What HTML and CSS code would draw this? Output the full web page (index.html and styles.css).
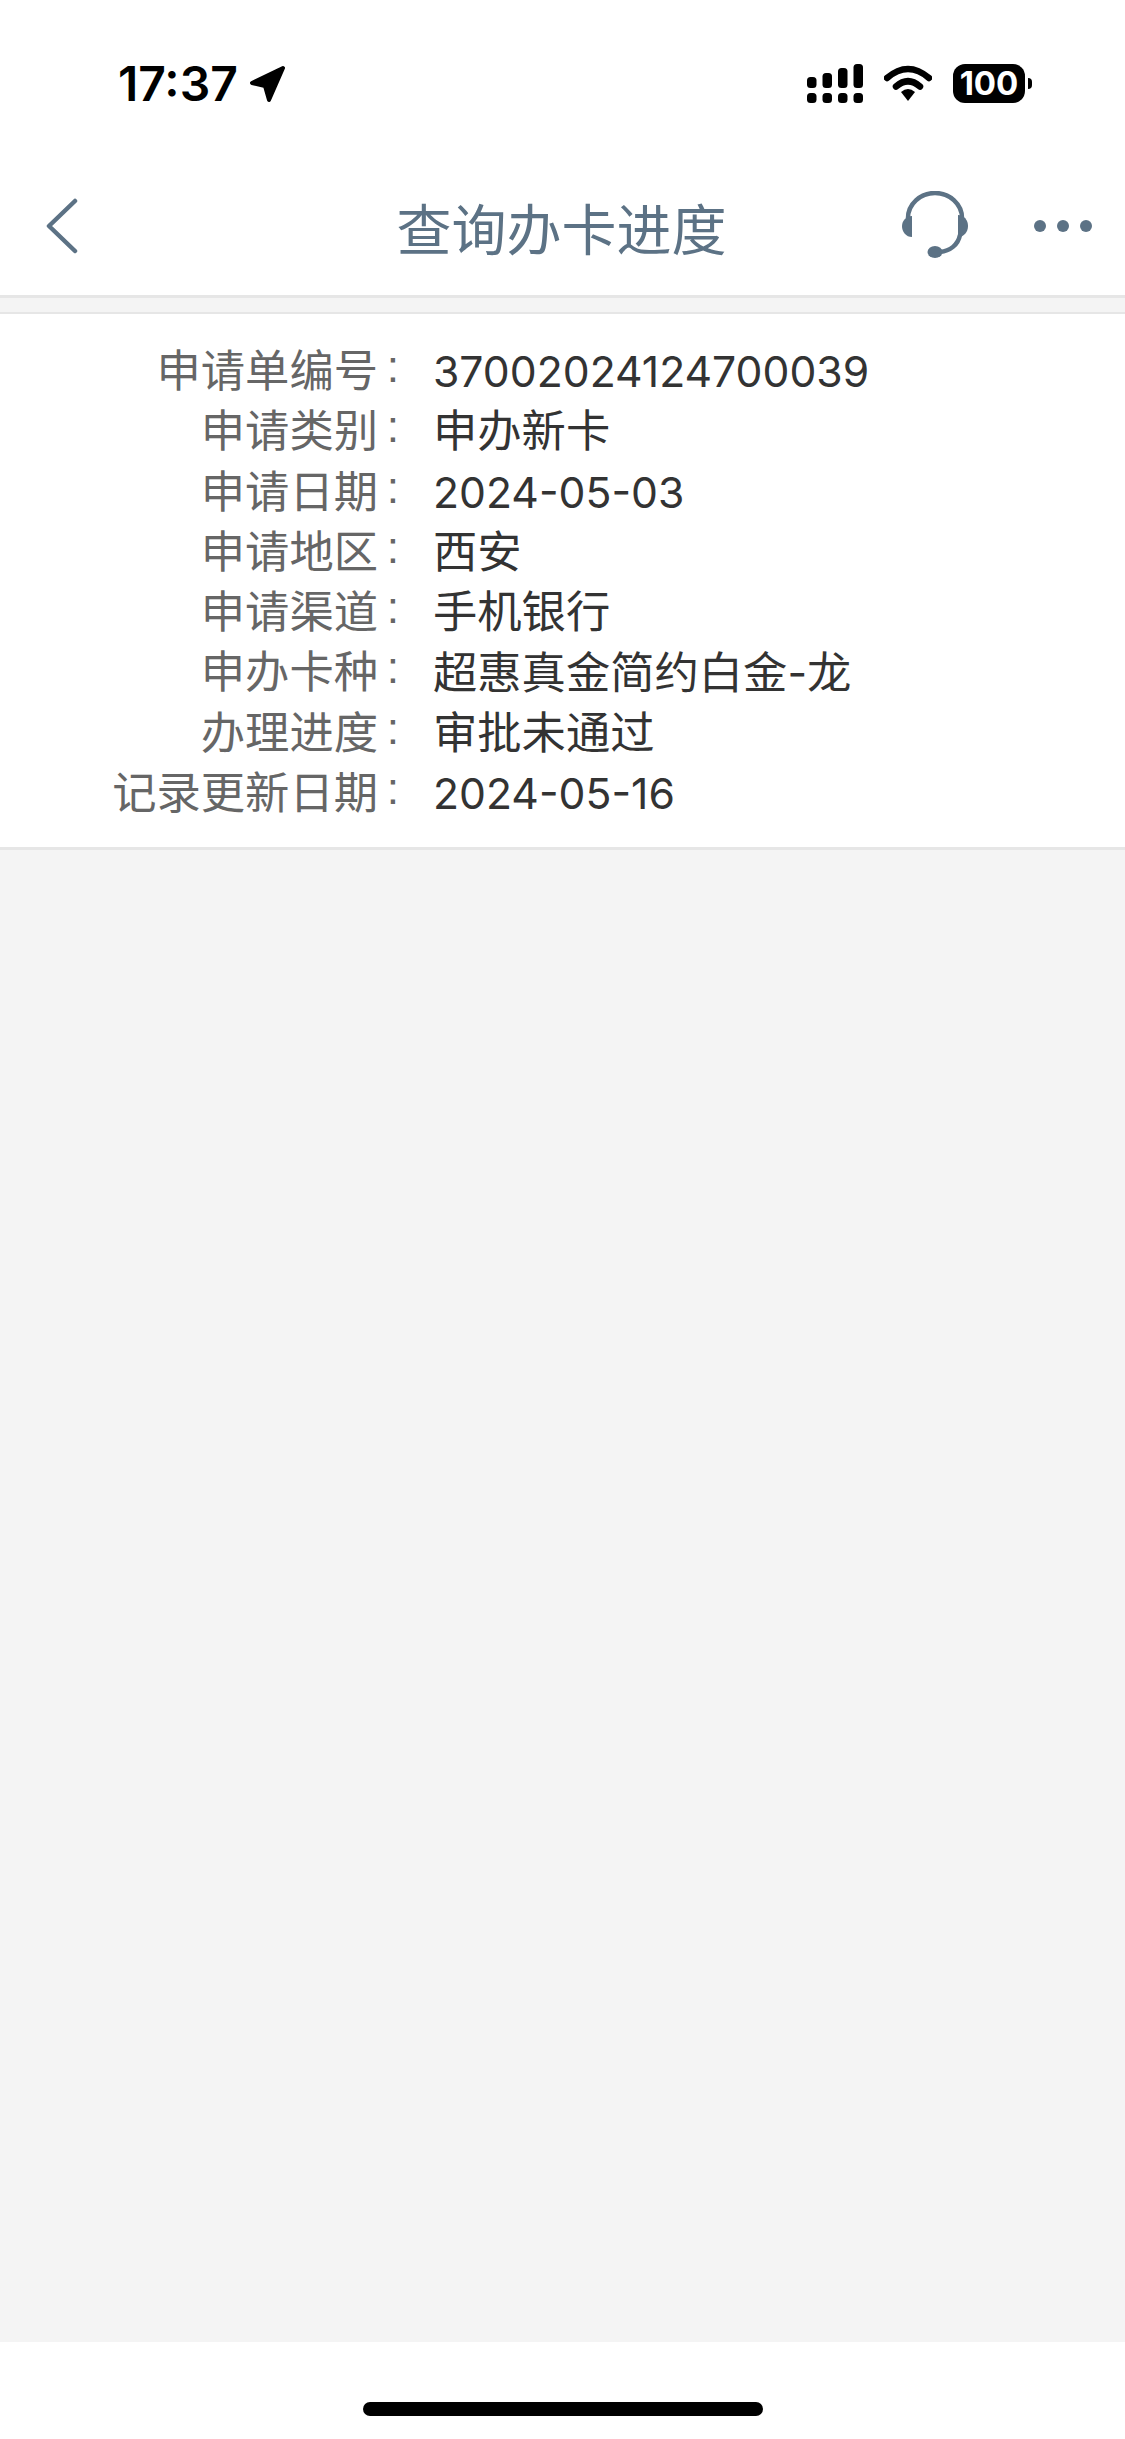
FILE: index.html
```html
<!DOCTYPE html>
<html lang="zh-CN">
  <head>
    <meta charset="UTF-8" />
    <meta name="viewport" content="width=device-width, initial-scale=1.0" />
    <title>查询办卡进度</title>
    <link rel="stylesheet" href="styles.css">
  </head>
  <body>
    <div class="status-bar">
      <div class="status-left">
        <span class="time">17:37</span>
        <svg class="arrow" width="38" height="38" viewBox="0 0 38 38">
          <path d="M34 3 L3 18 L16 21 L20 35 Z" fill="#000" stroke="#000" stroke-width="4" stroke-linejoin="round" />
        </svg>
      </div>
      <div class="status-right">
        <svg class="signal" width="56" height="40" viewBox="0 0 56 40">
          <rect x="0" y="13" width="9.5" height="11" rx="3.5" />
          <rect x="15.5" y="9" width="9.5" height="15" rx="3.5" />
          <rect x="31" y="4" width="9.5" height="20" rx="3.5" />
          <rect x="46.5" y="0" width="9.5" height="24" rx="3.5" />
          <rect x="0" y="29" width="9.5" height="10" rx="3.5" />
          <rect x="15.5" y="29" width="9.5" height="10" rx="3.5" />
          <rect x="31" y="29" width="9.5" height="10" rx="3.5" />
          <rect x="46.5" y="29" width="9.5" height="10" rx="3.5" />
        </svg>
        <svg class="wifi" width="48" height="36" viewBox="0 0 48 36">
          <path d="M3 13 Q24 -5 45 13" fill="none" stroke="#000" stroke-width="6.5" stroke-linecap="round" />
          <path d="M12 21.5 Q24 11 36 21.5" fill="none" stroke="#000" stroke-width="6.5" stroke-linecap="round" />
          <path d="M17 27 Q24 21 31 27 L24 36 Z" fill="#000" />
        </svg>
        <div class="battery">
          <div class="battery-body">100</div>
          <div class="battery-cap"></div>
        </div>
      </div>
    </div>

    <div class="nav">
      <div class="nav-side nav-left">
        <svg width="34" height="56" viewBox="0 0 34 56">
          <path d="M29 3 L3 28 L29 53" fill="none" stroke="#5c7285" stroke-width="4.5" stroke-linecap="round" stroke-linejoin="round" />
        </svg>
      </div>
      <div class="nav-title">查询办卡进度</div>
      <div class="nav-side nav-right">
        <svg class="headset" width="70" height="70" viewBox="0 0 70 70">
          <path d="M8 27 A27 25 0 0 1 62 27" fill="none" stroke="#5c7285" stroke-width="4.5" />
          <path d="M12 25 C6 25 2 30 2 35 C2 41 6 46 12 46 Z" fill="#5c7285" />
          <path d="M58 24 C64 24 68 29 68 35 C68 41 64 46 58 46 Z" fill="#5c7285" />
          <path d="M60 44 C58 54 50 60 40 61" fill="none" stroke="#5c7285" stroke-width="4.5" />
          <ellipse cx="35" cy="61" rx="7.5" ry="6" fill="#5c7285" />
        </svg>
        <div class="dots">
          <span></span>
          <span></span>
          <span></span>
        </div>
      </div>
    </div>
    <div class="gap"></div>

    <div class="info">
      <div class="row"><div class="label">申请单编号<span class="colon">:</span></div><div class="value"><span class="num">37002024124700039</span></div></div>
      <div class="row"><div class="label">申请类别<span class="colon">:</span></div><div class="value">申办新卡</div></div>
      <div class="row"><div class="label">申请日期<span class="colon">:</span></div><div class="value"><span class="num">2024-05-03</span></div></div>
      <div class="row"><div class="label">申请地区<span class="colon">:</span></div><div class="value">西安</div></div>
      <div class="row"><div class="label">申请渠道<span class="colon">:</span></div><div class="value">手机银行</div></div>
      <div class="row"><div class="label">申办卡种<span class="colon">:</span></div><div class="value">超惠真金简约白金<span class="num">-</span>龙</div></div>
      <div class="row"><div class="label">办理进度<span class="colon">:</span></div><div class="value">审批未通过</div></div>
      <div class="row"><div class="label">记录更新日期<span class="colon">:</span></div><div class="value"><span class="num">2024-05-16</span></div></div>
    </div>

    <div class="blank"></div>

    <div class="footer">
      <div class="home-bar"></div>
    </div>
  </body>
</html>
```

FILE: styles.css
```css
* {
  margin: 0;
  padding: 0;
  box-sizing: border-box;
}
body {
  width: 1125px;
  height: 2439px;
  display: flex;
  flex-direction: column;
  background: #fff;
  font-family: "Liberation Sans", "Noto Sans CJK SC", sans-serif;
}

.status-bar {
  height: 150px;
  display: flex;
  justify-content: space-between;
  padding: 64px 93px 0 118px;
}
.status-left {
  display: flex;
  align-items: flex-start;
  gap: 11px;
}
.time {
  font-family: Inter, sans-serif;
  font-size: 48px;
  font-weight: 600;
  line-height: 40px;
  color: #000;
}
.arrow {
  margin-top: 1px;
}
.status-right {
  display: flex;
  align-items: flex-start;
  gap: 21px;
}
.signal {
  fill: #000;
}
.wifi {
  margin-top: 1px;
}
.battery {
  display: flex;
  align-items: center;
  gap: 3px;
}
.battery-body {
  width: 72px;
  height: 39px;
  border-radius: 12px;
  background: #000;
  color: #fff;
  font-family: Inter, sans-serif;
  font-size: 33px;
  font-weight: 700;
  line-height: 39px;
  text-align: center;
}
.battery-cap {
  width: 4px;
  height: 11px;
  border-radius: 0 5px 5px 0;
  background: #000;
}

.nav {
  height: 145px;
  display: flex;
  align-items: center;
  padding-top: 7px;
}
.nav-side {
  width: 250px;
  display: flex;
  align-items: center;
}
.nav-left {
  padding-left: 46px;
}
.nav-right {
  justify-content: flex-end;
  padding-right: 33px;
}
.nav-title {
  flex: 1;
  text-align: center;
  font-size: 55px;
  color: #5c7285;
  padding-right: 2px;
}
.headset {
  margin-right: 64px;
}
.dots {
  display: flex;
  gap: 11px;
}
.dots span {
  width: 12px;
  height: 12px;
  border-radius: 50%;
  background: #5c7285;
}

.gap {
  height: 19px;
  background: #f4f4f4;
  border-top: 3px solid #e6e6e6;
  border-bottom: 2px solid #e6e6e6;
}

.info {
  padding: 28px 0 23px;
  border-bottom: 3px solid #e6e6e6;
}
.row {
  display: flex;
  height: 60.3px;
  line-height: 60.3px;
  font-size: 44.3px;
}
.label {
  width: 433px;
  padding-right: 26px;
  text-align: right;
  color: #666;
  white-space: nowrap;
}
.colon {
  display: inline-block;
  width: 30px;
  margin-right: -1px;
  line-height: 1;
  text-align: center;
  vertical-align: 5px;
}
.value {
  color: #333;
}
.num {
  font-family: Inter, sans-serif;
  font-size: 42.7px;
  vertical-align: 1px;
}

.blank {
  flex: 1;
  background: #f4f4f4;
}

.footer {
  height: 97px;
  padding-top: 60px;
  display: flex;
  justify-content: center;
}
.home-bar {
  width: 400px;
  height: 14px;
  border-radius: 7px;
  background: #000;
}
```
